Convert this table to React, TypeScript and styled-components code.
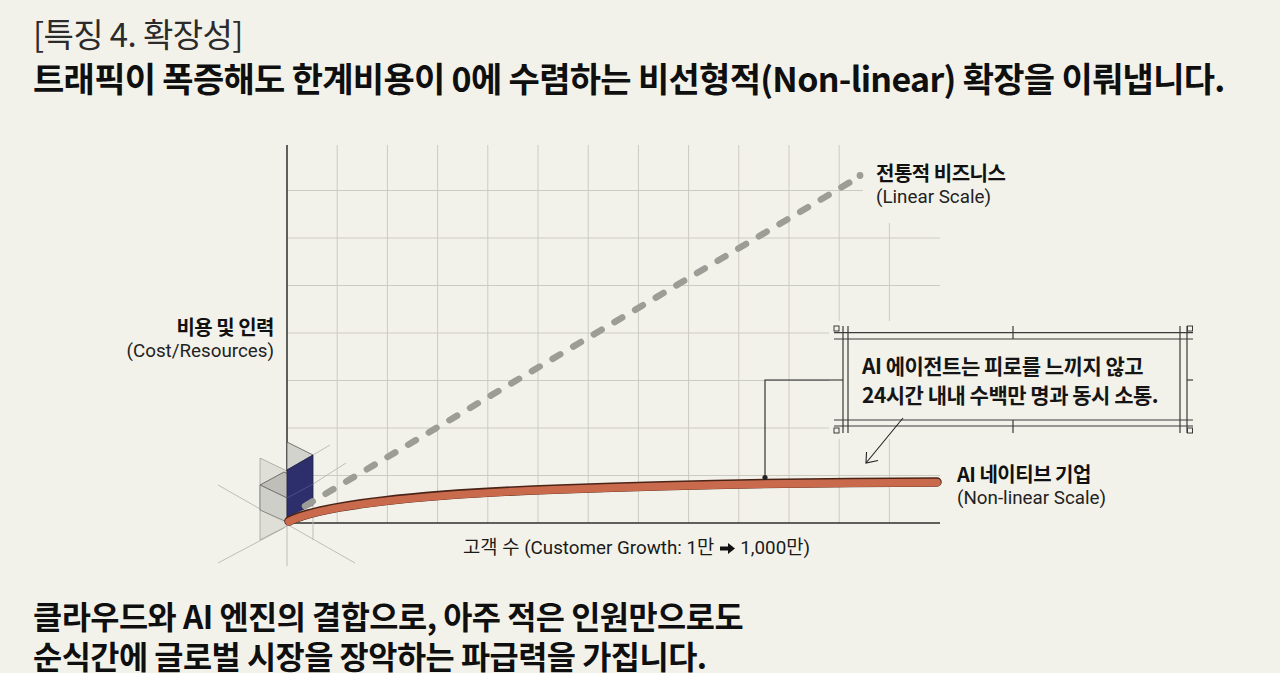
import * as React from 'react';
import styled, { createGlobalStyle } from 'styled-components';

const BG = '#f3f2ea';
const GRID = '#cccbc2';
const INK = '#2e2e2e';

const GlobalStyle = createGlobalStyle`
    html, body {
        margin: 0;
        padding: 0;
        background: ${BG};
    }
    body {
        font-family: Roboto, "Noto Sans CJK KR", sans-serif;
        color: #111;
    }
`;

// chart top in page coordinates, the svg viewBox uses page coords
const CHART_TOP = 99;

const xs = Array.from({ length: 12 }, (_, i) => 287 + 50.2 * (i + 1));
const ys = Array.from({ length: 7 }, (_, i) => 523 - 47.5 * (i + 1));

const CURVE = 'M289,521 C320,505 420,494 560,489 S820,482 937,482';

const Grid = () => (
    <g stroke={GRID} strokeWidth={1}>
        {xs.map((x, i) => (
            <line key={'v' + i} x1={x} x2={x} y1={i === 11 ? 223 : 145} y2={523} />
        ))}
        {ys.map((y, i) => (
            <line key={'h' + i} x1={287} x2={i === 6 ? 863 : 940} y1={y} y2={y} />
        ))}
    </g>
);

const OriginCube = () => (
    <g>
        <g stroke="#b9b8b0" strokeWidth={0.9}>
            <line x1={218} y1={485} x2={355} y2={563} />
            <line x1={218} y1={563} x2={284} y2={528} />
            <line x1={313} y1={455} x2={330} y2={445} />
            <line x1={313} y1={484} x2={346} y2={463} />
            <line x1={287} y1={523} x2={287} y2={566} />
            <line x1={313} y1={505} x2={313} y2={540} />
        </g>
        <polygon points="260,458 287,471 287,526 260,540" fill="#d9d8d0" fillOpacity={0.75} stroke="#8d8c86" strokeWidth={0.6} />
        <polygon points="287,442 313,455 287,470" fill="#d3d3cd" stroke="#555" strokeWidth={0.8} />
        <polygon points="260,485 284,472 310,484 287,498" fill="#b9b9b3" fillOpacity={0.85} stroke="#555" strokeWidth={0.8} />
        <polygon points="260,485 287,498 287,522 260,510" fill="#cfcfc9" stroke="#666" strokeWidth={0.7} />
        <polygon points="287,470 313,455 313,505 287,517" fill="#2d2f6c" stroke="#1e1f45" strokeWidth={0.8} />
        <line x1={287} y1={498} x2={313} y2={484} stroke="#5a5c8f" strokeWidth={0.7} />
    </g>
);

const Callout = () => (
    <g>
        <rect x={829} y={321} width={368} height={118} fill={BG} />
        <g stroke="#3a3a3a" strokeWidth={1.2} fill="none">
            <line x1={834} y1={332.7} x2={1193} y2={332.7} />
            <line x1={834} y1={339} x2={1193} y2={339} />
            <line x1={834} y1={420} x2={1193} y2={420} />
            <line x1={834} y1={426} x2={1193} y2={426} />
            <line x1={843} y1={326} x2={843} y2={433} />
            <line x1={848} y1={326} x2={848} y2={433} />
            <line x1={1180} y1={326} x2={1180} y2={433} />
            <line x1={1187} y1={326} x2={1187} y2={433} />
            <line x1={1013} y1={326} x2={1013} y2={339} />
            <line x1={1013} y1={420} x2={1013} y2={433} />
            <line x1={1187} y1={380} x2={1193} y2={380} />
            <rect x={834} y={326} width={5} height={5} strokeWidth={1} />
            <rect x={1187.5} y={326} width={5} height={5} strokeWidth={1} />
            <rect x={834} y={428} width={5} height={5} strokeWidth={1} />
            <rect x={1187.5} y={428} width={5} height={5} strokeWidth={1} />
        </g>
        <g stroke="#222" strokeWidth={1.1} fill="none">
            <polyline points="843,380 765,380 765,477" />
            <line x1={903} y1={418} x2={866} y2={463} />
            <polyline points="866.5,452 866,463 878,460.5" strokeLinejoin="miter" />
        </g>
    </g>
);

const ChartDrawing = () => (
    <ChartSvg width={1280} height={496} viewBox={`0 ${CHART_TOP} 1280 496`}>
        <Grid />
        <Callout />
        <line x1={287} y1={145} x2={287} y2={523.5} stroke={INK} strokeWidth={1.5} />
        <line x1={287} y1={523} x2={940} y2={523} stroke={INK} strokeWidth={1.5} />
        <OriginCube />
        <line
            x1={305}
            y1={506}
            x2={852}
            y2={181}
            stroke="#9d9d97"
            strokeWidth={6.5}
            strokeDasharray="9 15"
            strokeLinecap="round"
        />
        <circle cx={860} cy={175.5} r={3.4} fill="#9d9d97" />
        <path d={CURVE} fill="none" stroke="#4b2418" strokeWidth={9.5} strokeLinecap="round" />
        <path
            d={CURVE}
            transform="translate(0 0.6)"
            fill="none"
            stroke="#c96a4c"
            strokeWidth={7.6}
            strokeLinecap="round"
        />
        <circle cx={765} cy={477.5} r={2.6} fill="#222" />
    </ChartSvg>
);

const HeavyArrow = () => (
    <ArrowIcon width={15} height={11} viewBox="0 0 15 11" aria-hidden>
        <path d="M0,3.6 H8 V0 L15,5.5 L8,11 V7.4 H0 Z" fill="#111" />
    </ArrowIcon>
);

const Page = styled.div`
    width: 1280px;
    height: 673px;
    overflow: hidden;
    background: ${BG};
    display: flex;
    flex-direction: column;
`;

const Header = styled.header`
    padding: 14px 33px 0;
    font-family: "Noto Sans CJK KR", sans-serif;
`;

const Kicker = styled.div`
    font-size: 33px;
    line-height: 38px;
    font-weight: 400;
    color: #2b2b2b;
    letter-spacing: -0.6px;
`;

const Title = styled.h1`
    margin: 5px 0 0;
    font-size: 34px;
    line-height: 42px;
    font-weight: 700;
    color: #0f0f0f;
    letter-spacing: -0.7px;
    white-space: nowrap;
`;

const Chart = styled.div`
    position: relative;
    flex: none;
    height: 496px;
`;

const ChartSvg = styled.svg`
    display: block;
`;

const Note = styled.div<{ $x: number; $y: number; $right?: boolean }>`
    position: absolute;
    top: ${(p) => p.$y - CHART_TOP}px;
    ${(p) => (p.$right ? `right: ${1280 - p.$x}px; text-align: right;` : `left: ${p.$x}px;`)}
    line-height: 25px;
    white-space: nowrap;
`;

const NoteHead = styled.div`
    font-family: "Noto Sans CJK KR", sans-serif;
    font-size: 20px;
    font-weight: 700;
    color: #111;
    letter-spacing: -0.5px;
`;

const NoteSub = styled.div`
    font-size: 18.8px;
    color: #222;
`;

const AxisLabel = styled.div`
    position: absolute;
    left: 463px;
    top: ${536 - CHART_TOP}px;
    display: flex;
    align-items: center;
    gap: 4px;
    font-size: 18.8px;
    line-height: 24px;
    color: #1a1a1a;
    white-space: pre;
`;

const ArrowIcon = styled.svg`
    display: block;
    margin: 1px 1px 0 2px;
`;

const CalloutText = styled.div`
    position: absolute;
    left: 862px;
    top: ${351 - CHART_TOP}px;
    font-family: "Noto Sans CJK KR", sans-serif;
    font-size: 21px;
    line-height: 29px;
    font-weight: 700;
    color: #151515;
    letter-spacing: -0.5px;
    white-space: nowrap;
`;

const Footer = styled.p`
    margin: 0;
    padding: 0 33px;
    font-family: "Noto Sans CJK KR", sans-serif;
    font-size: 31.7px;
    line-height: 40px;
    font-weight: 700;
    color: #0f0f0f;
    letter-spacing: -0.5px;
    white-space: nowrap;
`;

const App = () => {
    return (
        <Page>
            <GlobalStyle />
            <Header>
                <Kicker>[특징 4. 확장성]</Kicker>
                <Title>트래픽이 폭증해도 한계비용이 0에 수렴하는 비선형적(Non-linear) 확장을 이뤄냅니다.</Title>
            </Header>
            <Chart>
                <ChartDrawing />
                <Note $x={876} $y={160}>
                    <NoteHead>전통적 비즈니스</NoteHead>
                    <NoteSub>(Linear Scale)</NoteSub>
                </Note>
                <Note $x={274} $y={313.5} $right>
                    <NoteHead>비용 및 인력</NoteHead>
                    <NoteSub>(Cost/Resources)</NoteSub>
                </Note>
                <Note $x={957} $y={460.5}>
                    <NoteHead>AI 네이티브 기업</NoteHead>
                    <NoteSub>(Non-linear Scale)</NoteSub>
                </Note>
                <CalloutText>
                    AI 에이전트는 피로를 느끼지 않고
                    <br />
                    24시간 내내 수백만 명과 동시 소통.
                </CalloutText>
                <AxisLabel>
                    <span>고객 수 (Customer Growth: 1만</span>
                    <HeavyArrow />
                    <span>1,000만)</span>
                </AxisLabel>
            </Chart>
            <Footer>
                클라우드와 AI 엔진의 결합으로, 아주 적은 인원만으로도
                <br />
                순식간에 글로벌 시장을 장악하는 파급력을 가집니다.
            </Footer>
        </Page>
    );
};

export default App;
